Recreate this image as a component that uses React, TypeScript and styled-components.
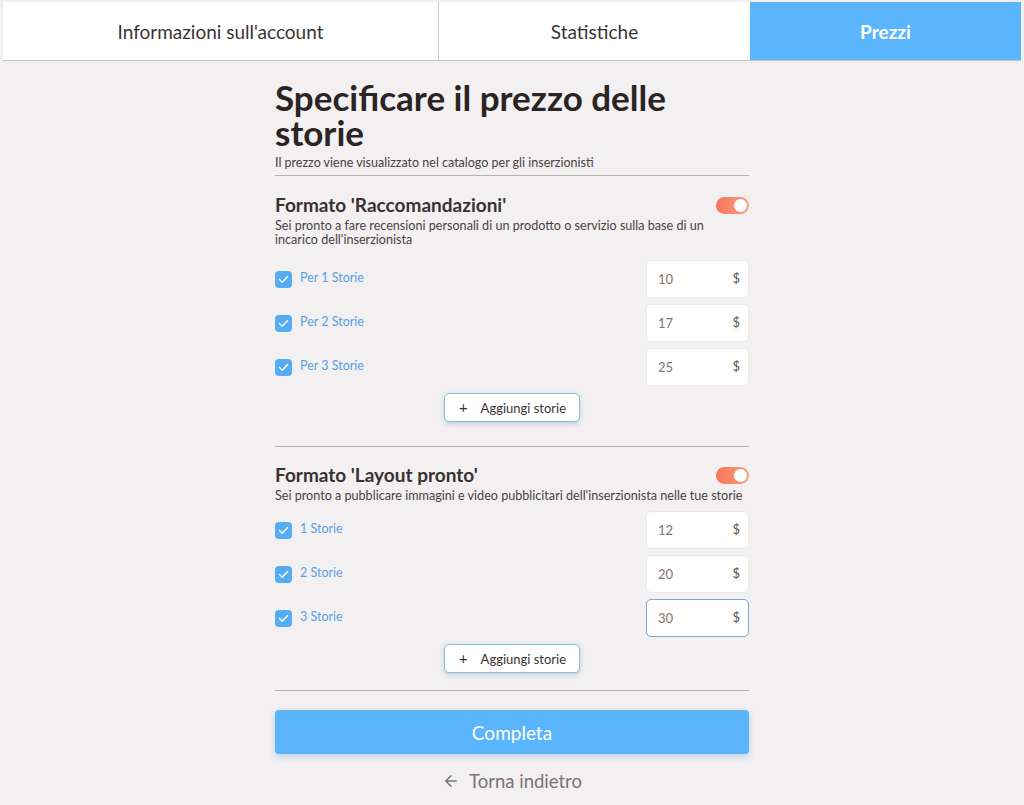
import { createGlobalStyle } from 'styled-components';
import styled from 'styled-components';

const GlobalStyle = createGlobalStyle`
  body {
    margin: 0;
    background: #f2f0f0;
    font-family: Lato, 'Open Sans', sans-serif;
    color: #2b2424;
  }
`;

type Row = { label: string; price: string; focused?: boolean };

const formats: { title: string; text: string; rows: Row[]; last?: boolean }[] = [
  {
    title: "Formato 'Raccomandazioni'",
    text: "Sei pronto a fare recensioni personali di un prodotto o servizio sulla base di un incarico dell'inserzionista",
    rows: [
      { label: 'Per 1 Storie', price: '10' },
      { label: 'Per 2 Storie', price: '17' },
      { label: 'Per 3 Storie', price: '25' },
    ],
  },
  {
    title: "Formato 'Layout pronto'",
    text: "Sei pronto a pubblicare immagini e video pubblicitari dell'inserzionista nelle tue storie",
    rows: [
      { label: '1 Storie', price: '12' },
      { label: '2 Storie', price: '20' },
      { label: '3 Storie', price: '30', focused: true },
    ],
    last: true,
  },
];

export default function App() {
  return (
    <>
      <GlobalStyle />
      <Tabs>
        <Tab $width={435}>Informazioni sull'account</Tab>
        <Tab $width={311}>Statistiche</Tab>
        <Tab $active>Prezzi</Tab>
      </Tabs>
      <Main>
        <Title>Specificare il prezzo delle storie</Title>
        <Subtitle>Il prezzo viene visualizzato nel catalogo per gli inserzionisti</Subtitle>
        {formats.map((f) => (
          <Section key={f.title} $last={f.last}>
            <SectionHead>
              <SectionTitle>{f.title}</SectionTitle>
              <Toggle />
            </SectionHead>
            <SectionText $narrow={!f.last}>{f.text}</SectionText>
            <Rows $tight={f.last}>
              {f.rows.map((r) => (
                <PriceRow key={r.label}>
                  <Check>
                    <Box>
                      <svg width="11" height="9" viewBox="0 0 11 9" fill="none">
                        <path d="M1.5 4.6 4.2 7.2 9.6 1.6" stroke="#fff" strokeWidth="1.4" strokeLinecap="round" strokeLinejoin="round" />
                      </svg>
                    </Box>
                    <CheckLabel>{r.label}</CheckLabel>
                  </Check>
                  <PriceBox $focused={r.focused}>
                    <PriceValue>{r.price}</PriceValue>
                    <Currency>$</Currency>
                  </PriceBox>
                </PriceRow>
              ))}
            </Rows>
            <AddButton>
              <Plus>+</Plus>
              Aggiungi storie
            </AddButton>
          </Section>
        ))}
        <Submit>Completa</Submit>
        <Back>
          <svg width="18" height="18" viewBox="0 0 24 24" fill="none" stroke="#777" strokeWidth="2" strokeLinecap="round" strokeLinejoin="round">
            <path d="M19 12H5M12 19l-7-7 7-7" />
          </svg>
          Torna indietro
        </Back>
      </Main>
    </>
  );
}

const Tabs = styled.nav`
  display: flex;
  height: 58px;
  margin: 2px 3px 0 2px;
  background: #fff;
  border-left: 1px solid #eee;
  border-bottom: 1px solid #c4c4c4;
`;

const Tab = styled.div<{ $active?: boolean; $width?: number }>`
  display: flex;
  align-items: center;
  justify-content: center;
  ${(p) => (p.$width ? `width: ${p.$width}px;` : 'flex: 1;')}
  font-size: 19px;
  font-weight: ${(p) => (p.$active ? 700 : 400)};
  color: ${(p) => (p.$active ? '#fff' : '#3a3333')};
  background: ${(p) => (p.$active ? '#5bb5fd' : '#fff')};
  border-right: ${(p) => (p.$width === 435 ? '1px solid #c9c9c9' : 'none')};
`;

const Main = styled.main`
  width: 474px;
  margin: 0 auto;
  padding: 19px 0 0;
`;

const Title = styled.h1`
  max-width: 420px;
  margin: 0;
  font-size: 35px;
  line-height: 35px;
  font-weight: 700;
  color: #2b2424;
`;

const Subtitle = styled.p`
  margin: 6px 0 0;
  padding-bottom: 5px;
  font-size: 12.5px;
  line-height: 14px;
  color: #4a4242;
  border-bottom: 1px solid #b8b2b2;
`;

const Section = styled.section<{ $last?: boolean }>`
  display: flex;
  flex-direction: column;
  padding: ${(p) => (p.$last ? '17px 0 17px' : '18px 0 24px')};
  border-bottom: 1px solid #b8b2b2;
`;

const SectionHead = styled.div`
  display: flex;
  justify-content: space-between;
  align-items: center;
`;

const SectionTitle = styled.h2`
  margin: 0;
  font-size: 19px;
  line-height: 22px;
  font-weight: 700;
  color: #3a3232;
`;

const Toggle = styled.span`
  position: relative;
  width: 33px;
  height: 17px;
  border-radius: 9px;
  background: linear-gradient(90deg, #f6735f, #fca277);
  &::after {
    content: '';
    position: absolute;
    right: 2px;
    top: 2px;
    width: 13px;
    height: 13px;
    border-radius: 50%;
    background: #fff;
  }
`;

const SectionText = styled.p<{ $narrow?: boolean }>`
  max-width: ${(p) => (p.$narrow ? '445px' : 'none')};
  margin: 3px 0 0;
  font-size: 12.6px;
  line-height: 14px;
  white-space: ${(p) => (p.$narrow ? 'normal' : 'nowrap')};
  color: #4a4242;
`;

const Rows = styled.div<{ $tight?: boolean }>`
  display: flex;
  flex-direction: column;
  gap: 6px;
  margin-top: ${(p) => (p.$tight ? '8px' : '13px')};
`;

const PriceRow = styled.div`
  display: flex;
  justify-content: space-between;
  align-items: center;
`;

const Check = styled.label`
  display: flex;
  align-items: center;
  gap: 8px;
`;

const Box = styled.span`
  display: flex;
  align-items: center;
  justify-content: center;
  width: 17px;
  height: 17px;
  border-radius: 4px;
  background: #55acf5;
`;

const CheckLabel = styled.span`
  font-size: 12.5px;
  color: #5a9fe6;
  margin-top: -3px;
`;

const PriceBox = styled.div<{ $focused?: boolean }>`
  box-sizing: border-box;
  display: flex;
  justify-content: space-between;
  width: 103px;
  height: 38px;
  padding: 0 8px 0 11px;
  background: #fff;
  border-radius: 5px;
  border: 1px solid ${(p) => (p.$focused ? '#7fa7c9' : '#ebe8e8')};
`;

const PriceValue = styled.span`
  align-self: center;
  font-size: 13px;
  color: #7a7474;
`;

const Currency = styled.span`
  margin-top: 9px;
  font-size: 13px;
  color: #5a5454;
`;

const AddButton = styled.button`
  align-self: center;
  display: flex;
  align-items: center;
  gap: 13px;
  margin-top: 7px;
  height: 29px;
  padding: 0 13px 0 14px;
  background: #fff;
  border: 1px solid #8bbcd8;
  border-radius: 5px;
  box-shadow: 0 2px 5px rgba(100, 150, 190, 0.35);
  font-family: inherit;
  font-size: 13px;
  color: #3a3333;
`;

const Plus = styled.span`
  font-size: 15px;
  line-height: 1;
`;

const Submit = styled.button`
  display: block;
  width: 100%;
  height: 44px;
  margin-top: 19px;
  border: none;
  border-radius: 4px;
  background: #5bb5fd;
  box-shadow: 0 3px 6px rgba(90, 140, 190, 0.3);
  font-family: inherit;
  font-size: 19px;
  color: #fff;
`;

const Back = styled.div`
  display: flex;
  align-items: center;
  justify-content: center;
  gap: 9px;
  margin-top: 16px;
  font-size: 18.5px;
  color: #7a7474;
`;
